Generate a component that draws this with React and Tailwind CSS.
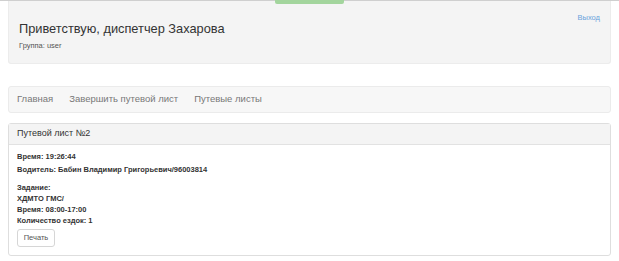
export default function App() {
  return (
    <div className="w-[619px] h-[261px] bg-white overflow-hidden relative" style={{ fontFamily: '"Liberation Sans", Arial, sans-serif' }}>
      <div className="h-px bg-[#cfcfcf] w-full" />
      <div className="absolute left-[275px] top-0 w-[69px] h-[4px] bg-[#a3d59d] rounded-b-[2px]" />
      <div className="mx-2 h-[63px] bg-[#f4f4f4] rounded-b-[3px] border border-t-0 border-[#ececec] flex justify-between px-[10px]">
        <div className="pt-[20px]">
          <div className="text-[12.8px] leading-[16px] text-[#333]">Приветствую, диспетчер Захарова</div>
          <div className="text-[7.5px] leading-[10px] text-[#555] mt-[4px]">Группа: user</div>
        </div>
        <div className="pt-[11px] text-[7.5px] text-[#6aa3dc]">Выход</div>
      </div>
      <div className="mx-2 mt-[22px] h-[27px] bg-[#f7f7f7] border border-[#ebebeb] rounded-[3px] flex items-center pl-[8px] text-[9.5px] text-[#777]">
        <span>Главная</span>
        <span className="ml-[16px]">Завершить путевой лист</span>
        <span className="ml-[16px]">Путевые листы</span>
      </div>
      <div className="mx-2 mt-[10px] border border-[#dedede] rounded-[3px] bg-white">
        <div className="h-[21px] bg-[#f4f4f4] border-b border-[#e2e2e2] flex items-center pl-[8px] text-[9px] text-[#333]">Путевой лист №2</div>
        <div className="px-[8px] pt-[7px] pb-[8px] text-[7.5px] font-bold text-[#333] leading-[10.7px]">
          <div>Время: 19:26:44</div>
          <div className="mt-[2.5px]">Водитель: Бабин Владимир Григорьевич/96003814</div>
          <div className="mt-[7.5px]">Задание:</div>
          <div>ХДМТО ГМС/</div>
          <div>Время: 08:00-17:00</div>
          <div>Количество ездок: 1</div>
          <div className="mt-[3px] w-[38px] h-[18px] border border-[#d6d6d6] rounded-[3px] flex items-center justify-center font-normal text-[7.5px] text-[#555]">Печать</div>
        </div>
      </div>
    </div>
  );
}
